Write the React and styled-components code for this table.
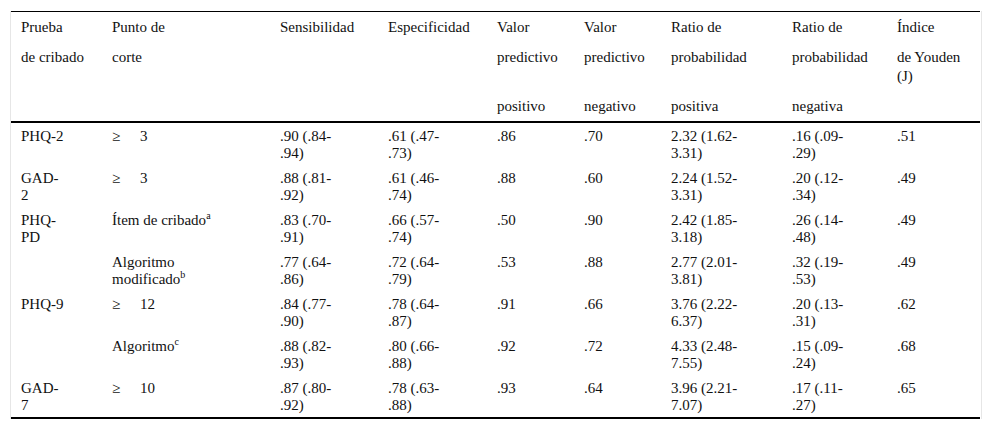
import React from 'react';
import styled, { createGlobalStyle } from 'styled-components';

const GlobalStyle = createGlobalStyle`
  html, body {
    margin: 0;
    padding: 0;
    background: #fff;
  }
  body {
    font-family: "Liberation Serif", "Times New Roman", serif;
    color: #111;
  }
`;

const Page = styled.div`
  padding: 11px 10px 0 10px;
  width: 992px;
  box-sizing: border-box;
`;

const Frame = styled.div`
  width: 972px;
  border-left: 1px solid #e6e6e6;
  border-right: 1px solid #e6e6e6;
  box-sizing: border-box;
`;

const Table = styled.table`
  width: 969px;
  border-collapse: collapse;
  table-layout: fixed;
  font-family: "Liberation Serif", "Times New Roman", serif;
  font-size: 15px;
  color: #111;
  border-top: 1px solid #000;
  border-bottom: 2px solid #000;
`;

const HeadCell = styled.th`
  text-align: left;
  font-weight: normal;
  vertical-align: top;
  line-height: 19px;
  padding: 6px 10px 5px 10px;
`;

const HeadRow = styled.tr`
  border-bottom: ${(p) => (p.$last ? '2px solid #000' : 'none')};
`;

const Cell = styled.td`
  vertical-align: top;
  line-height: 17px;
  padding: 5px 10px 3px 10px;
`;

const Line = styled.div`
  white-space: nowrap;
  height: ${(p) => (p.$head ? '19px' : '17px')};
`;

const Sup = styled.sup`
  font-size: 10px;
  line-height: 0;
  vertical-align: 6px;
`;

const Geq = styled.span`
  display: inline-block;
  width: 28px;
`;

const widths = [91, 168, 108, 109, 87, 87, 121, 105, 93];

const header = [
  ['Prueba', 'Punto de', 'Sensibilidad', 'Especificidad', 'Valor', 'Valor', 'Ratio de', 'Ratio de', 'Índice'],
  ['de cribado', 'corte', '', '', 'predictivo', 'predictivo', 'probabilidad', 'probabilidad', ['de Youden', '(J)']],
  ['', '', '', '', 'positivo', 'negativo', 'positiva', 'negativa', ''],
];

const rows = [
  { test: ['PHQ-2'], cut: { geq: '3' }, vals: [['.90 (.84-', '.94)'], ['.61 (.47-', '.73)'], ['.86'], ['.70'], ['2.32 (1.62-', '3.31)'], ['.16 (.09-', '.29)'], ['.51']] },
  { test: ['GAD-', '2'], cut: { geq: '3' }, vals: [['.88 (.81-', '.92)'], ['.61 (.46-', '.74)'], ['.88'], ['.60'], ['2.24 (1.52-', '3.31)'], ['.20 (.12-', '.34)'], ['.49']] },
  { test: ['PHQ-', 'PD'], cut: { lines: [['Ítem de cribado', 'a']] }, vals: [['.83 (.70-', '.91)'], ['.66 (.57-', '.74)'], ['.50'], ['.90'], ['2.42 (1.85-', '3.18)'], ['.26 (.14-', '.48)'], ['.49']] },
  { test: [], cut: { lines: [['Algoritmo'], ['modificado', 'b']] }, vals: [['.77 (.64-', '.86)'], ['.72 (.64-', '.79)'], ['.53'], ['.88'], ['2.77 (2.01-', '3.81)'], ['.32 (.19-', '.53)'], ['.49']] },
  { test: ['PHQ-9'], cut: { geq: '12' }, vals: [['.84 (.77-', '.90)'], ['.78 (.64-', '.87)'], ['.91'], ['.66'], ['3.76 (2.22-', '6.37)'], ['.20 (.13-', '.31)'], ['.62']] },
  { test: [], cut: { lines: [['Algoritmo', 'c']] }, vals: [['.88 (.82-', '.93)'], ['.80 (.66-', '.88)'], ['.92'], ['.72'], ['4.33 (2.48-', '7.55)'], ['.15 (.09-', '.24)'], ['.68']] },
  { test: ['GAD-', '7'], cut: { geq: '10' }, vals: [['.87 (.80-', '.92)'], ['.78 (.63-', '.88)'], ['.93'], ['.64'], ['3.96 (2.21-', '7.07)'], ['.17 (.11-', '.27)'], ['.65']] },
];

function Lines({ items, head }) {
  return items.map((t, i) => <Line key={i} $head={head}>{t}</Line>);
}

function CutCell({ cut }) {
  if (cut.geq) {
    return (
      <Cell>
        <Line><Geq>≥</Geq>{cut.geq}</Line>
      </Cell>
    );
  }
  return (
    <Cell>
      {cut.lines.map(([text, sup], i) => (
        <Line key={i}>
          {text}
          {sup && <Sup>{sup}</Sup>}
        </Line>
      ))}
    </Cell>
  );
}

export default function App() {
  return (
    <>
      <GlobalStyle />
      <Page>
        <Frame>
          <Table>
            <colgroup>
              {widths.map((w, i) => <col key={i} style={{ width: w }} />)}
            </colgroup>
            <thead>
              {header.map((r, ri) => (
                <HeadRow key={ri} $last={ri === header.length - 1}>
                  {r.map((c, ci) => (
                    <HeadCell key={ci}>
                      {Array.isArray(c) ? <Lines items={c} head /> : c}
                    </HeadCell>
                  ))}
                </HeadRow>
              ))}
            </thead>
            <tbody>
              {rows.map((r, ri) => (
                <tr key={ri}>
                  <Cell><Lines items={r.test} /></Cell>
                  <CutCell cut={r.cut} />
                  {r.vals.map((v, vi) => (
                    <Cell key={vi}><Lines items={v} /></Cell>
                  ))}
                </tr>
              ))}
            </tbody>
          </Table>
        </Frame>
      </Page>
    </>
  );
}
